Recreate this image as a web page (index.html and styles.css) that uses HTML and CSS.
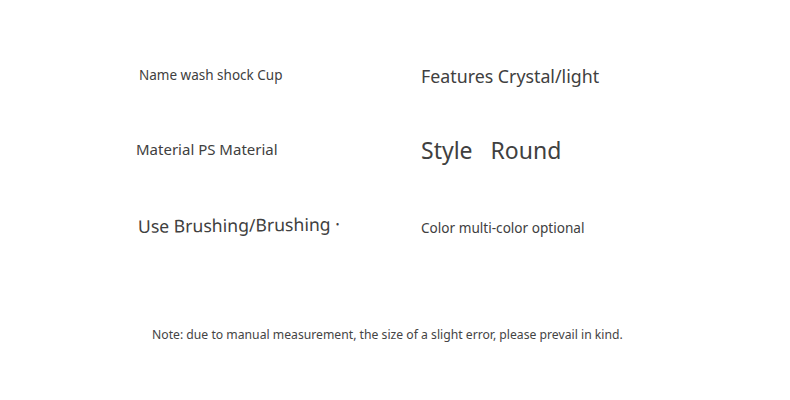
FILE: index.html
```html
<!DOCTYPE html>
<html>
<head>
<meta charset="utf-8">
<link rel="stylesheet" href="styles.css">
</head>
<body>
<div class="sheet">
  <div class="specs">
    <div class="cell c-name">Name wash shock Cup</div>
    <div class="cell c-feat">Features Crystal/light</div>
    <div class="cell c-mat">Material PS Material</div>
    <div class="cell c-style">Style&nbsp;&nbsp;&nbsp;Round</div>
    <div class="cell c-use"><span class="tilt">Use Brushing/Brushing ·</span></div>
    <div class="cell c-color">Color multi-color optional</div>
  </div>
  <p class="note">Note: due to manual measurement, the size of a slight error, please prevail in kind.</p>
</div>
</body>
</html>
```
FILE: styles.css
```css
html, body {
  margin: 0;
  background: #ffffff;
}
.sheet {
  width: 790px;
  height: 400px;
  padding-top: 60px;
  box-sizing: border-box;
  font-family: "Noto Sans", "Open Sans", sans-serif;
  color: #404040;
}
.specs {
  display: grid;
  grid-template-columns: 285px 300px;
  grid-template-rows: 30px 30px 30px;
  row-gap: 46px;
  padding-left: 136px;
}
.cell {
  display: flex;
  align-items: center;
  white-space: nowrap;
  line-height: 1;
}
.c-name { font-size: 13.5px; padding-left: 3px; padding-top: 2px; }
.c-feat { font-size: 17.8px; padding-top: 3px; }
.c-mat { font-size: 15px; padding-bottom: 4px; }
.c-style { font-size: 23px; padding-bottom: 1px; }
.c-use { font-size: 17.6px; padding-left: 2px; }
.tilt { display: inline-block; transform: rotate(-0.7deg); transform-origin: left center; }
.c-color { font-size: 13.6px; padding-top: 2px; }
.note {
  margin: 84px 0 0 152px;
  font-size: 12.2px;
  line-height: 18px;
  color: #444;
}
```
